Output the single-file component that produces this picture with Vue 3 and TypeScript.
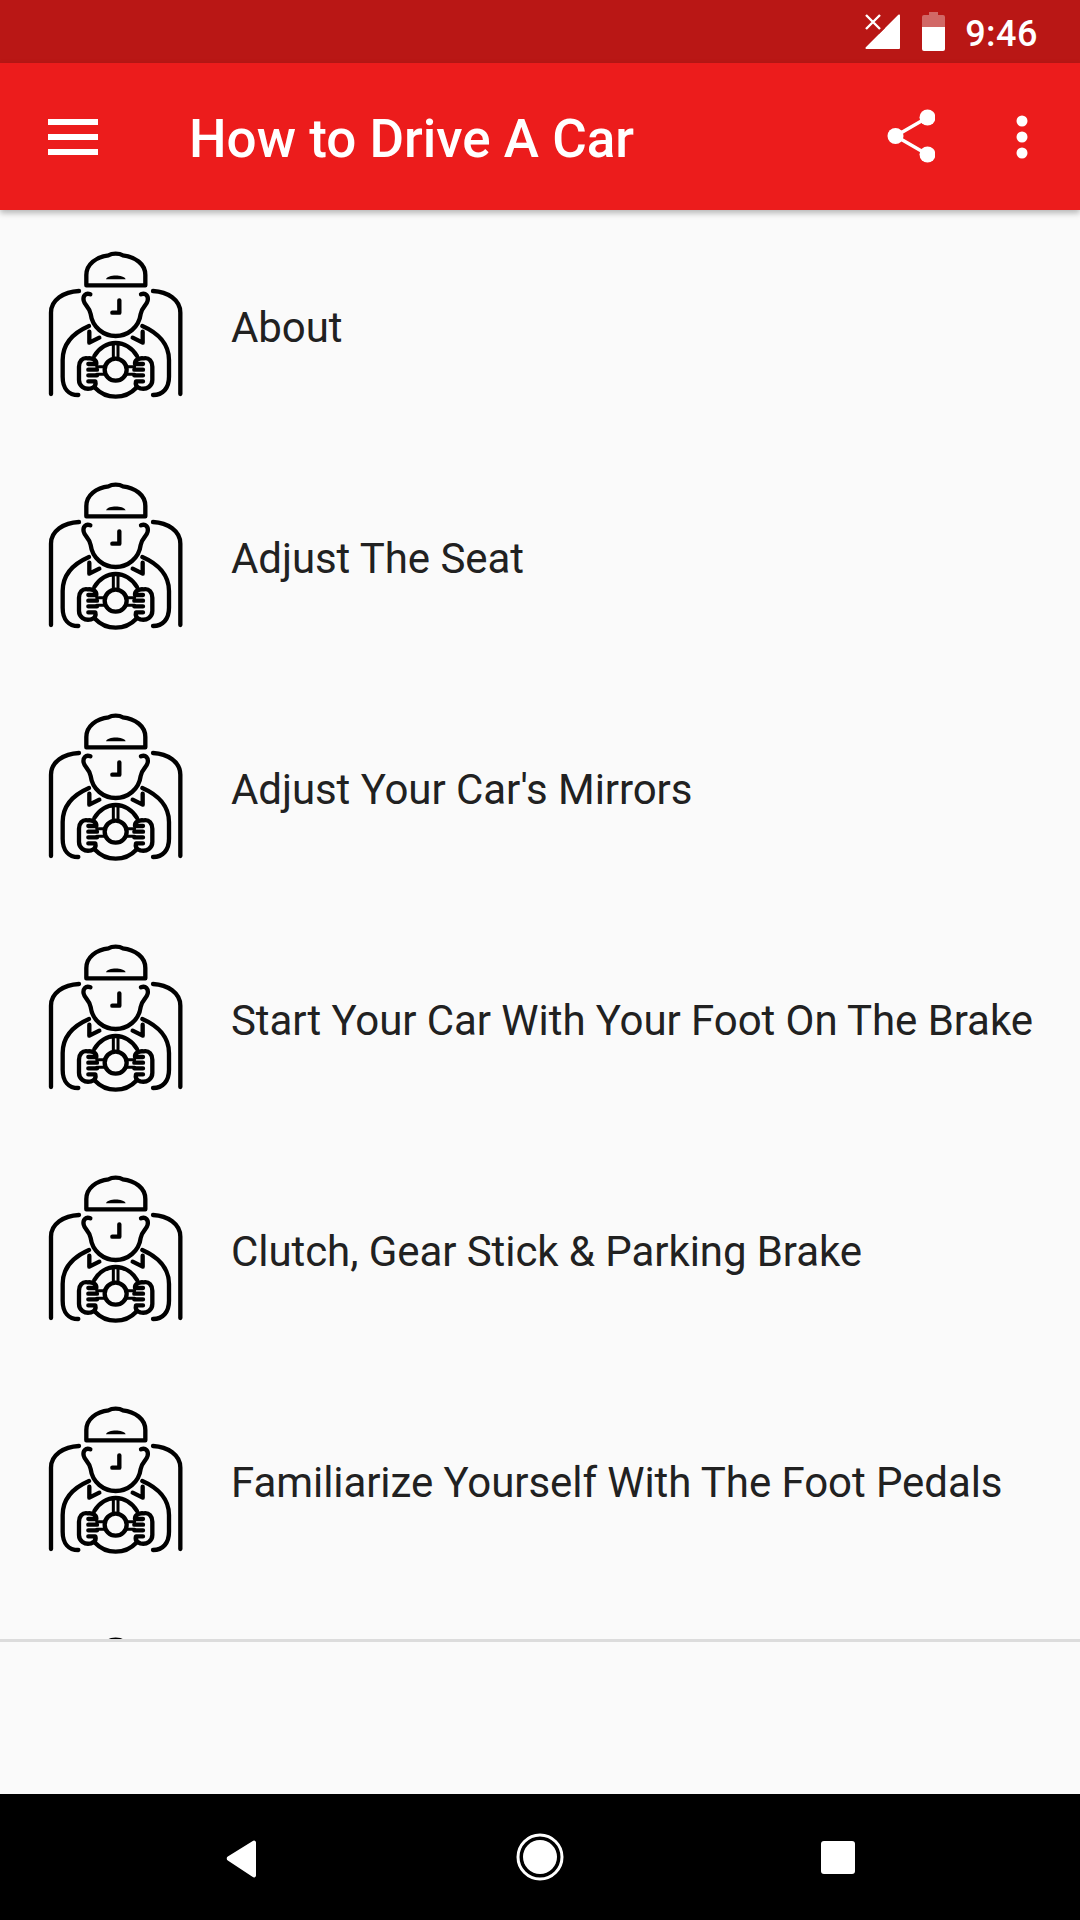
<script setup lang="ts">
const items: string[] = [
  'About',
  'Adjust The Seat',
  "Adjust Your Car's Mirrors",
  'Start Your Car With Your Foot On The Brake',
  'Clutch, Gear Stick & Parking Brake',
  'Familiarize Yourself With The Foot Pedals',
  '',
]
</script>

<template>
  <div class="screen">
    <div class="status">
      <svg class="signal" width="36" height="36" viewBox="0 0 36 36">
        <path d="M35 1.5V34a1 1 0 0 1-1 1H1.5a1 1 0 0 1-.7-1.7L33.300 .8A1 1 0 0 1 35 1.500Z" fill="#fff" />
        <path d="M-1 -1 17 17" stroke="#b91715" stroke-width="8" fill="none" />
        <path d="M1 1 15 15M15 1 1 15" stroke="#fff" stroke-width="2.400" fill="none" />
      </svg>
      <svg class="battery" width="23" height="39" viewBox="0 0 23 39">
        <path d="M7 0H16V3H21a2 2 0 0 1 2 2V15H0V5a2 2 0 0 1 2-2H7Z" fill="#fff" opacity=".35" />
        <path d="M0 15H23V37a2 2 0 0 1-2 2H2a2 2 0 0 1-2-2Z" fill="#fff" />
      </svg>
      <span class="time">9:46</span>
    </div>

    <header class="appbar">
      <div class="menu"><span></span><span></span><span></span></div>
      <h1 class="title">How to Drive A Car</h1>
      <svg class="share" width="48" height="54" viewBox="0 0 48 54">
        <g fill="#fff">
          <circle cx="8.500" cy="27" r="8" />
          <circle cx="40.500" cy="8.500" r="8" />
          <circle cx="40.500" cy="45.500" r="8" />
        </g>
        <path d="M40.500 8.500 8.500 27 40.500 45.500" fill="none" stroke="#fff" stroke-width="3.500" />
      </svg>
      <svg class="more" width="12" height="44" viewBox="0 0 12 44">
        <g fill="#fff">
          <circle cx="6" cy="6" r="5.500" />
          <circle cx="6" cy="22" r="5.500" />
          <circle cx="6" cy="38" r="5.500" />
        </g>
      </svg>
    </header>

    <main class="list">
      <div v-for="(item, i) in items" :key="i" class="row">
        <svg class="driver" width="140" height="150" viewBox="140 90 420 450">
          <g fill="none" stroke="#000" stroke-width="13" stroke-linecap="round" stroke-linejoin="round">
            <path d="M258 196V165C258 132 288 110 325 106C335 99 357 99 367 106C404 110 435 132 435 165V196Z" />
            <path d="M152 522V278C152 240 190 215 236 213" />
            <path d="M540 522V278C540 240 502 215 458 213" />
            <path d="M270 223C256 217 247 228 250 242C253 257 268 262 271 282C276 322 310 348 346 348C382 348 416 322 421 282C424 262 439 257 442 242C445 228 436 217 422 223" />
            <path d="M357 241V278H336" />
            <path d="M266 318C220 338 187 372 187 420V470C187 505 205 525 234 525" />
            <path d="M426 318C472 338 506 372 506 420V470C506 505 487 525 458 525" />
            <path d="M267 335V368L297 353" />
            <path d="M427 335V368L397 353" />
            <path d="M282 408C296 384 320 369 346 369C372 369 396 384 410 408" />
            <path d="M284 503C300 520 322 530 346 530C370 530 392 520 408 503" />
            <circle cx="346" cy="449" r="33" />
            <path d="M339 374V414M353 374V414" stroke-width="9" />
            <path d="M289 440H314M289 463H314" stroke-width="9" />
            <path d="M378 440H403M378 463H403" stroke-width="9" />
            <path d="M262 415C245 412 236 425 236 440V480C236 497 252 510 272 505C282 502 288 495 285 484H264M264 466H290M264 449H290M264 432H288C289 420 276 413 262 415" />
            <path d="M430 415C447 412 456 425 456 440V480C456 497 440 510 420 505C410 502 404 495 407 484H428M428 466H402M428 449H402M428 432H404C403 420 416 413 430 415" />
          </g>
          <path d="M317 178C322 163 370 163 376 178Z" fill="#000" />
        </svg>
        <span v-if="item" class="label">{{ item }}</span>
      </div>
    </main>

    <div class="rule"></div>
    <div class="blank"></div>

    <nav class="nav">
      <svg width="48" height="48" viewBox="0 0 48 48">
        <path d="M38 9.500V42.500a2 2 0 0 1-3.200 1.600L9.800 27.500a2.400 2.400 0 0 1 0-4L34.800 7.900A2 2 0 0 1 38 9.500Z" fill="#fff" />
      </svg>
      <svg width="48" height="48" viewBox="0 0 48 48">
        <circle cx="24" cy="24" r="22" fill="none" stroke="#fff" stroke-width="3" />
        <circle cx="24" cy="24" r="17" fill="#fff" />
      </svg>
      <svg width="48" height="48" viewBox="0 0 48 48">
        <rect x="7" y="8" width="34" height="33" rx="3" fill="#fff" />
      </svg>
    </nav>
  </div>
</template>

<style scoped>
.screen {
  width: 1080px;
  height: 1920px;
  display: flex;
  flex-direction: column;
  background: #fafafa;
  font-family: Roboto, "Liberation Sans", sans-serif;
  overflow: hidden;
}
.status {
  height: 63px;
  flex: none;
  background: #b91715;
  display: flex;
  align-items: center;
  justify-content: flex-end;
  padding-right: 42px;
  box-sizing: border-box;
}
.signal { margin-right: 21px; }
.battery { margin-right: 20px; margin-top: -1px; }
.time {
  color: #fff;
  font-size: 36px;
  font-weight: 500;
  letter-spacing: .5px;
  padding-top: 4px;
}
.appbar {
  position: relative;
  z-index: 1;
  height: 147px;
  flex: none;
  background: #ec1c1c;
  display: flex;
  align-items: center;
  box-shadow: 0 3px 6px rgba(0, 0, 0, .28);
}
.menu {
  width: 50px;
  margin-left: 48px;
  display: flex;
  flex-direction: column;
  gap: 9px;
}
.menu span {
  display: block;
  height: 6px;
  background: #fff;
}
.title {
  margin: 0 0 0 91px;
  padding-top: 4px;
  flex: 1;
  color: #fff;
  font-size: 53px;
  font-weight: 500;
}
.share { margin-right: 81px; margin-top: -2px; }
.more { margin-right: 52px; }
.list {
  height: 1430px;
  flex: none;
  overflow: hidden;
}
.row {
  height: 231px;
  display: flex;
  align-items: center;
}
.driver {
  flex: none;
  margin-left: 47px;
  margin-top: -1px;
}
.label {
  margin-left: 44px;
  padding-top: 3px;
  color: #212121;
  font-size: 42px;
  letter-spacing: -.07px;
  white-space: nowrap;
}
.rule {
  height: 3px;
  flex: none;
  background: #dcdcdc;
  margin-top: -1px;
}
.blank { flex: 1; }
.nav {
  height: 126px;
  flex: none;
  background: #000;
  display: flex;
  align-items: center;
  justify-content: center;
  gap: 250px;
}
</style>
